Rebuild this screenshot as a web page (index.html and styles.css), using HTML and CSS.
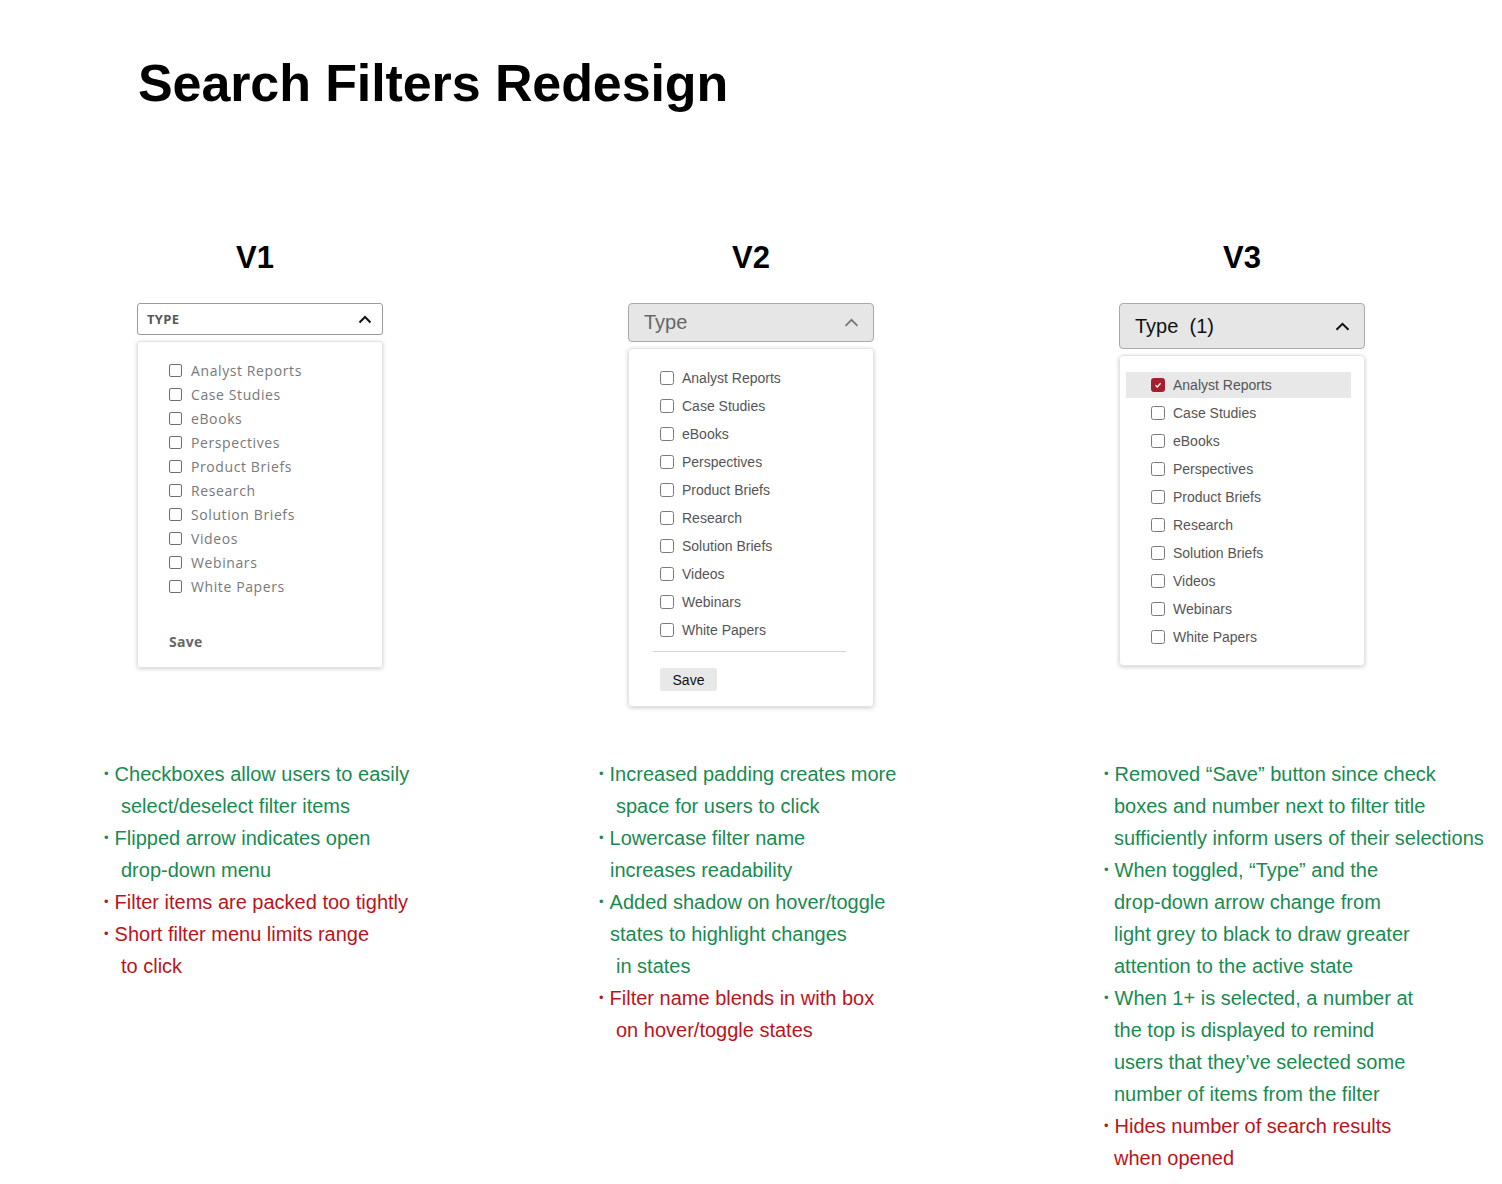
FILE: index.html
```html
<!DOCTYPE html>
<html>
<head>
<meta charset="utf-8">
<link rel="stylesheet" href="styles.css">
</head>
<body>
<h1 class="title">Search Filters Redesign</h1>

<div class="versions">
  <section class="version">
    <h2 class="vhead vhead1">V1</h2>
    <div class="v1-head">
      <span>TYPE</span>
      <svg class="chev" width="14" height="9" viewBox="0 0 14 9"><path d="M1.5 7.5 L7 2 L12.5 7.5" fill="none" stroke="#111" stroke-width="2"/></svg>
    </div>
    <div class="v1-panel">
      <ul class="v1-list">
        <li><span class="cb"></span>Analyst Reports</li>
        <li><span class="cb"></span>Case Studies</li>
        <li><span class="cb"></span>eBooks</li>
        <li><span class="cb"></span>Perspectives</li>
        <li><span class="cb"></span>Product Briefs</li>
        <li><span class="cb"></span>Research</li>
        <li><span class="cb"></span>Solution Briefs</li>
        <li><span class="cb"></span>Videos</li>
        <li><span class="cb"></span>Webinars</li>
        <li><span class="cb"></span>White Papers</li>
      </ul>
      <div class="v1-save">Save</div>
    </div>
  </section>

  <section class="version">
    <h2 class="vhead">V2</h2>
    <div class="v2-head">
      <span>Type</span>
      <svg class="chev" width="15" height="9" viewBox="0 0 15 9"><path d="M1.5 7.8 L7.5 1.8 L13.5 7.8" fill="none" stroke="#777" stroke-width="1.8"/></svg>
    </div>
    <div class="v2-panel">
      <ul class="v2-list">
        <li><span class="cb cb2"></span>Analyst Reports</li>
        <li><span class="cb cb2"></span>Case Studies</li>
        <li><span class="cb cb2"></span>eBooks</li>
        <li><span class="cb cb2"></span>Perspectives</li>
        <li><span class="cb cb2"></span>Product Briefs</li>
        <li><span class="cb cb2"></span>Research</li>
        <li><span class="cb cb2"></span>Solution Briefs</li>
        <li><span class="cb cb2"></span>Videos</li>
        <li><span class="cb cb2"></span>Webinars</li>
        <li><span class="cb cb2"></span>White Papers</li>
      </ul>
      <div class="v2-divider"></div>
      <div class="v2-save">Save</div>
    </div>
  </section>

  <section class="version">
    <h2 class="vhead">V3</h2>
    <div class="v3-head">
      <span>Type&nbsp;&nbsp;(1)</span>
      <svg class="chev" width="15" height="9" viewBox="0 0 15 9"><path d="M1.5 7.8 L7.5 1.8 L13.5 7.8" fill="none" stroke="#111" stroke-width="2"/></svg>
    </div>
    <div class="v3-panel">
      <ul class="v3-list">
        <li class="active"><span class="cb cb2 checked"><svg width="10" height="10" viewBox="0 0 10 10"><path d="M2.5 5.2 L4.3 7 L7.6 3.2" fill="none" stroke="#fff" stroke-width="1.3"/></svg></span>Analyst Reports</li>
        <li><span class="cb cb2"></span>Case Studies</li>
        <li><span class="cb cb2"></span>eBooks</li>
        <li><span class="cb cb2"></span>Perspectives</li>
        <li><span class="cb cb2"></span>Product Briefs</li>
        <li><span class="cb cb2"></span>Research</li>
        <li><span class="cb cb2"></span>Solution Briefs</li>
        <li><span class="cb cb2"></span>Videos</li>
        <li><span class="cb cb2"></span>Webinars</li>
        <li><span class="cb cb2"></span>White Papers</li>
      </ul>
    </div>
  </section>
</div>

<div class="notes">
  <div class="notecol">
    <p class="g"><span class="b">•</span>Checkboxes allow users to easily</p>
    <p class="g i2">select/deselect filter items</p>
    <p class="g"><span class="b">•</span>Flipped arrow indicates open</p>
    <p class="g i2">drop-down menu</p>
    <p class="r"><span class="b">•</span>Filter items are packed too tightly</p>
    <p class="r"><span class="b">•</span>Short filter menu limits range</p>
    <p class="r i2">to click</p>
  </div>
  <div class="notecol">
    <p class="g"><span class="b">•</span>Increased padding creates more</p>
    <p class="g i2">space for users to click</p>
    <p class="g"><span class="b">•</span>Lowercase filter name</p>
    <p class="g i1">increases readability</p>
    <p class="g"><span class="b">•</span>Added shadow on hover/toggle</p>
    <p class="g i1">states to highlight changes</p>
    <p class="g i2">in states</p>
    <p class="r"><span class="b">•</span>Filter name blends in with box</p>
    <p class="r i2">on hover/toggle states</p>
  </div>
  <div class="notecol col3">
    <p class="g"><span class="b">•</span>Removed “Save” button since check</p>
    <p class="g i0">boxes and number next to filter title</p>
    <p class="g i0">sufficiently inform users of their selections</p>
    <p class="g"><span class="b">•</span>When toggled, “Type” and the</p>
    <p class="g i0">drop-down arrow change from</p>
    <p class="g i0">light grey to black to draw greater</p>
    <p class="g i0">attention to the active state</p>
    <p class="g"><span class="b">•</span>When 1+ is selected, a number at</p>
    <p class="g i0">the top is displayed to remind</p>
    <p class="g i0">users that they’ve selected some</p>
    <p class="g i0">number of items from the filter</p>
    <p class="r"><span class="b">•</span>Hides number of search results</p>
    <p class="r i0">when opened</p>
  </div>
</div>
</body>
</html>
```

FILE: styles.css
```css
* { box-sizing: border-box; }
html, body { margin: 0; padding: 0; background: #fff; }
body {
  width: 1502px;
  font-family: "Liberation Sans", Arial, sans-serif;
  color: #000;
}
.title {
  margin: 0;
  padding: 53px 0 0 138px;
  font-size: 52px;
  line-height: 60px;
  font-weight: 700;
  letter-spacing: -0.1px;
}
.versions {
  display: grid;
  grid-template-columns: 246px 246px 246px;
  column-gap: 245px;
  padding-left: 137px;
  margin-top: 125px;
  align-items: start;
}
.version { display: flex; flex-direction: column; }
.vhead {
  margin: 0;
  text-align: center;
  font-size: 31px;
  line-height: 40px;
  font-weight: 700;
  height: 65px;
}
.vhead1 { padding-right: 10px; }
ul { list-style: none; margin: 0; padding: 0; }
.cb {
  display: inline-flex;
  align-items: center;
  justify-content: center;
  width: 13px;
  height: 13px;
  border: 1px solid #6f6f6f;
  border-radius: 2px;
  flex: none;
}
.cb2 { width: 14px; height: 14px; border-color: #7a7a7a; border-radius: 2.5px; }
.checked { background: #a3202f; border-color: #a3202f; }
.chev { display: block; }

/* V1 */
.v1-head {
  height: 32px;
  border: 1px solid #9a9a9a;
  border-radius: 3px;
  display: flex;
  align-items: center;
  justify-content: space-between;
  padding: 0 10px 0 9px;
  font-family: "Open Sans", sans-serif;
  font-size: 13px;
  font-weight: 700;
  color: #575757;
  letter-spacing: 0.3px;
}
.v1-panel {
  margin-top: 6px;
  border: 1px solid #e2e2e2;
  border-radius: 3px;
  box-shadow: 0 1px 4px rgba(0,0,0,0.18);
  padding: 16px 0 15px 31px;
}
.v1-list li {
  display: flex;
  align-items: center;
  height: 24px;
  font-family: "Open Sans", sans-serif;
  font-size: 14px;
  color: #787878;
  letter-spacing: 0.6px;
}
.v1-list .cb { margin-right: 9px; }
.v1-save {
  margin-top: 34px;
  line-height: 20px;
  font-family: "Open Sans", sans-serif;
  font-size: 14px;
  font-weight: 700;
  color: #666;
  letter-spacing: 0.3px;
}

/* V2 */
.v2-head {
  height: 39px;
  background: #e6e6e6;
  border: 1px solid #a9a9a9;
  border-radius: 4px;
  display: flex;
  align-items: center;
  justify-content: space-between;
  padding: 0 14px 0 15px;
  font-size: 20px;
  color: #666;
}
.v2-panel {
  margin-top: 6px;
  border: 1px solid #e4e4e4;
  border-radius: 4px;
  box-shadow: 0 1px 4px rgba(0,0,0,0.2);
  padding: 15px 27px 15px 24px;
}
.v2-list li, .v3-list li {
  display: flex;
  align-items: center;
  height: 28px;
  font-size: 14px;
  color: #555;
}
.v2-list { padding-left: 7px; }
.v2-list .cb, .v3-list .cb { margin-right: 8px; }
.v2-divider {
  margin-top: 7px;
  height: 1px;
  background: #d3d3d3;
}
.v2-save {
  margin: 16px 0 0 7px;
  width: 57px;
  height: 23px;
  background: #e8e8e8;
  border-radius: 2px;
  display: flex;
  align-items: center;
  justify-content: center;
  font-size: 14px;
  color: #111;
}

/* V3 */
.v3-head {
  height: 46px;
  background: #e6e6e6;
  border: 1px solid #a9a9a9;
  border-radius: 4px;
  display: flex;
  align-items: center;
  justify-content: space-between;
  padding: 0 14px 0 15px;
  font-size: 20px;
  color: #111;
}
.v3-panel {
  margin-top: 6px;
  border: 1px solid #e4e4e4;
  border-radius: 4px;
  box-shadow: 0 1px 4px rgba(0,0,0,0.2);
  padding: 15px 13px 14px 6px;
}
.v3-list li {
  padding-left: 25px;
  border-top: 1px solid transparent;
  border-bottom: 1px solid transparent;
  background-clip: padding-box;
}
.v3-list li.active { background-color: #e8e8e8; }

/* Notes */
.notes {
  display: grid;
  grid-template-columns: 495px 504px auto;
  padding-left: 104px;
  margin-top: 51px;
}
.col3 { padding-left: 1px; }
.notecol p {
  margin: 0;
  font-size: 20px;
  line-height: 32px;
  white-space: nowrap;
}
.notecol .b {
  display: inline-block;
  font-size: 13px;
  line-height: 1;
  vertical-align: 3px;
  margin-right: 6px;
}
.g { color: #1a8a50; }
.r { color: #b8151b; }
.i2 { padding-left: 17px; }
.i1 { padding-left: 11px; }
.i0 { padding-left: 10px; }
```
